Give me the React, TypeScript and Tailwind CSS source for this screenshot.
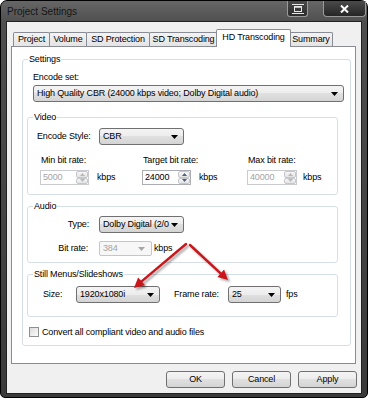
import React from "react";

const ddBg =
  "bg-[linear-gradient(#f4f4f4_0%,#ececec_50%,#e0e0e0_50%,#d4d4d4_100%)]";

function Caret({ color = "#000" }: { color?: string }) {
  return (
    <svg width="7" height="4" viewBox="0 0 7 4" className="shrink-0">
      <path d="M0 0h7L3.5 4z" fill={color} />
    </svg>
  );
}

function Select({ value, className }: { value: string; className: string }) {
  return (
    <div
      className={`flex h-[17px] items-center overflow-hidden whitespace-nowrap rounded-[3px] border border-[#707070] pl-[3px] pr-[5px] ${ddBg} ${className}`}
    >
      <span className="flex-1 overflow-hidden">{value}</span>
      <Caret />
    </div>
  );
}

function SpinBtn({ up, color }: { up?: boolean; color: string }) {
  return (
    <div className="flex flex-1 items-center justify-center rounded-[2px] border border-[#c5c7cb] bg-[linear-gradient(#f7f7f7,#e4e4e4)]">
      <svg width="5" height="3" viewBox="0 0 5 3">
        <path d={up ? "M0 3h5L2.5 0z" : "M0 0h5L2.5 3z"} fill={color} />
      </svg>
    </div>
  );
}

function Spin({
  value,
  disabled,
  className,
}: {
  value: string;
  disabled?: boolean;
  className: string;
}) {
  const c = disabled ? "#b9b9b9" : "#4d6185";
  return (
    <div
      className={`flex h-[15px] items-stretch border bg-white ${
        disabled ? "border-[#c9cbcf]" : "border-[#abadb3]"
      } ${className}`}
    >
      <span
        className={`flex-1 pl-[2px] leading-[13px] ${
          disabled ? "text-[#a3a3a3]" : "text-black"
        }`}
      >
        {value}
      </span>
      <div className="flex w-[12px] flex-col">
        <SpinBtn up color={c} />
        <SpinBtn color={c} />
      </div>
    </div>
  );
}

function Group({
  title,
  className,
  children,
}: {
  title: string;
  className: string;
  children: React.ReactNode;
}) {
  return (
    <fieldset
      className={`rounded-[3px] border border-[#d5dfe5] px-[4px] ${className}`}
    >
      <legend className="ml-[1px] px-[1px] leading-[11px]">{title}</legend>
      {children}
    </fieldset>
  );
}

const tabs = [
  { name: "Project", w: "w-[37px]" },
  { name: "Volume", w: "w-[38px]" },
  { name: "SD Protection", w: "w-[64px]" },
  { name: "SD Transcoding", w: "w-[69px]" },
  { name: "HD Transcoding", w: "w-[75px]", active: true },
  { name: "Summary", w: "w-[44px]" },
];

export default function App() {
  return (
    <div className="relative h-[400px] w-[368px] overflow-hidden bg-white font-['Liberation_Sans','DejaVu_Sans',sans-serif] text-[9px] tracking-[-0.15px] text-black">
      <div className="flex h-[398px] w-[368px] flex-col rounded-t-[7px] rounded-b-[5px] border border-black bg-[linear-gradient(#666666,#4e4e4e_22px,#3a3a3a)]">
        {/* title bar */}
        <div className="flex h-[20px] items-start">
          <span className="mt-[5px] pl-[6px] text-[10px] leading-[12px] tracking-normal text-[#161616]">
            Project Settings
          </span>
          <div className="ml-auto mr-[15px] flex h-[16px] w-[21px] items-center justify-center rounded-b-[3px] border border-t-0 border-[#9a9a9a] bg-[linear-gradient(#4a4a4a,#2c2c2c)]">
            <svg width="12" height="10" viewBox="0 0 12 10">
              <path d="M0 0.5h12M0 9.5h12" stroke="#e8e8e8" strokeWidth="1" />
              <rect x="2.5" y="2.5" width="7" height="5" fill="none" stroke="#e8e8e8" />
              <path d="M2.5 3h7" stroke="#e8e8e8" strokeWidth="1.5" />
            </svg>
          </div>
          <div className="mr-[1px] flex h-[16px] w-[43px] items-center justify-center rounded-b-[4px] border border-t-0 border-[#9a9a9a] bg-[linear-gradient(#4a4a4a,#262626)]">
            <svg width="9" height="8" viewBox="0 0 9 8">
              <path d="M1 0.5l7 7M8 0.5l-7 7" stroke="#fff" strokeWidth="2" />
            </svg>
          </div>
        </div>

        {/* client area */}
        <div className="mx-[5px] flex h-[373px] flex-col border border-[#222] bg-[#f0f0f0]">
          {/* tab strip */}
          <div className="mt-[7px] flex h-[17px] items-end pl-[6px]">
            {tabs.map((t, i) =>
              t.active ? (
                <div
                  key={t.name}
                  className={`relative z-10 -mb-px -ml-[2px] flex h-[18px] items-start justify-center rounded-t-[2px] border border-b-0 border-[#898c95] bg-white pt-[2px] leading-[11px] ${t.w}`}
                >
                  {t.name}
                </div>
              ) : (
                <div
                  key={t.name}
                  className={`flex h-[14px] items-center justify-center rounded-t-[2px] border border-b-0 border-[#898c95] bg-[linear-gradient(#f3f3f3,#e4e4e4)] leading-[11px] ${
                    i === 0 ? "" : i === 5 ? "-ml-[2px]" : "-ml-px"
                  } ${t.w}`}
                >
                  {t.name}
                </div>
              )
            )}
          </div>

          {/* tab panel */}
          <div className="ml-[4px] h-[318px] w-[345px] border border-[#898c95] bg-white">
            <Group title="Settings" className="ml-[10px] mt-[7px] w-[329px] pb-[8px]">
              <div className="ml-[6px] mt-[7px] leading-[11px]">Encode set:</div>
              <Select
                value="High Quality CBR (24000 kbps video; Dolby Digital audio)"
                className="ml-[6px] mt-[2px] w-[311px]"
              />

              <Group title="Video" className="mt-[10px] w-[311px] pb-[9px]">
                <div className="mt-[5px] flex h-[17px] items-center">
                  <span className="ml-[5px] w-[62px]">Encode Style:</span>
                  <Select value="CBR" className="w-[85px]" />
                </div>
                <div className="ml-[8px] mt-[10px] flex leading-[11px]">
                  <span className="w-[102px] pl-[1px]">Min bit rate:</span>
                  <span className="w-[105px] pl-[1px]">Target bit rate:</span>
                  <span className="pl-[1px]">Max bit rate:</span>
                </div>
                <div className="ml-[8px] mt-[4px] flex items-center">
                  <div className="flex w-[102px] items-center">
                    <Spin value="5000" disabled className="w-[49px]" />
                    <span className="ml-[8px]">kbps</span>
                  </div>
                  <div className="flex w-[105px] items-center">
                    <Spin value="24000" className="w-[49px]" />
                    <span className="ml-[8px]">kbps</span>
                  </div>
                  <div className="flex items-center">
                    <Spin value="40000" disabled className="w-[50px]" />
                    <span className="ml-[6px]">kbps</span>
                  </div>
                </div>
              </Group>

              <Group title="Audio" className="mt-[6px] w-[311px] pb-[6px]">
                <div className="mt-[4px] flex h-[17px] items-center">
                  <span className="ml-[5px] w-[62px] pr-[10px] text-right">Type:</span>
                  <Select value="Dolby Digital (2/0" className="w-[85px]" />
                </div>
                <div className="mt-[8px] flex h-[15px] items-center">
                  <span className="ml-[5px] w-[62px] pr-[11px] text-right">Bit rate:</span>
                  <div className="flex h-[15px] w-[53px] items-center rounded-[2px] border border-[#c3c6ca] bg-[#f7f7f7] pl-[3px] pr-[6px] text-[#a3a3a3]">
                    <span className="flex-1">384</span>
                    <Caret color="#a8a8a8" />
                  </div>
                  <span className="ml-[2px]">kbps</span>
                </div>
              </Group>

              <Group title="Still Menus/Slideshows" className="mt-[6px] w-[311px] pb-[13px]">
                <div className="mt-[6px] flex h-[17px] items-center">
                  <span className="ml-[11px] w-[33px]">Size:</span>
                  <Select value="1920x1080i" className="w-[84px]" />
                  <span className="ml-[14px] w-[54px]">Frame rate:</span>
                  <Select value="25" className="w-[53px]" />
                  <span className="ml-[5px]">fps</span>
                </div>
              </Group>

              <div className="ml-[2px] mt-[10px] flex h-[10px] items-center">
                <div className="h-[10px] w-[10px] border border-[#8e8f8f] bg-[linear-gradient(135deg,#dcdcdc,#fbfbfb)]" />
                <span className="ml-[3px] leading-[11px]">
                  Convert all compliant video and audio files
                </span>
              </div>
            </Group>
          </div>

          {/* dialog buttons */}
          <div className="mt-[7px] flex justify-end gap-[7px] pr-[4px]">
            {["OK", "Cancel", "Apply"].map((b) => (
              <div
                key={b}
                className={`flex h-[17px] w-[59px] items-center justify-center rounded-[3px] border border-[#707070] ${ddBg}`}
              >
                {b}
              </div>
            ))}
          </div>
        </div>
      </div>

      {/* red annotation arrows */}
      <svg
        className="pointer-events-none absolute inset-0"
        width="368"
        height="400"
        viewBox="0 0 368 400"
      >
        <defs>
          <filter id="sh" x="-20%" y="-20%" width="140%" height="140%">
            <feDropShadow dx="2" dy="2" stdDeviation="1.2" floodColor="#000" floodOpacity="0.35" />
          </filter>
        </defs>
        <g filter="url(#sh)" fill="#c8151b" stroke="#c8151b">
          <path d="M186 244L141.6 281.4" strokeWidth="2.4" fill="none" strokeLinecap="round" />
          <polygon points="134,288 145.1,285.2 138.1,277.4" stroke="none" />
          <path d="M190 245L220.6 273.3" strokeWidth="2.4" fill="none" strokeLinecap="round" />
          <polygon points="228,280 217.4,277.1 224.1,269.6" stroke="none" />
        </g>
      </svg>
    </div>
  );
}
